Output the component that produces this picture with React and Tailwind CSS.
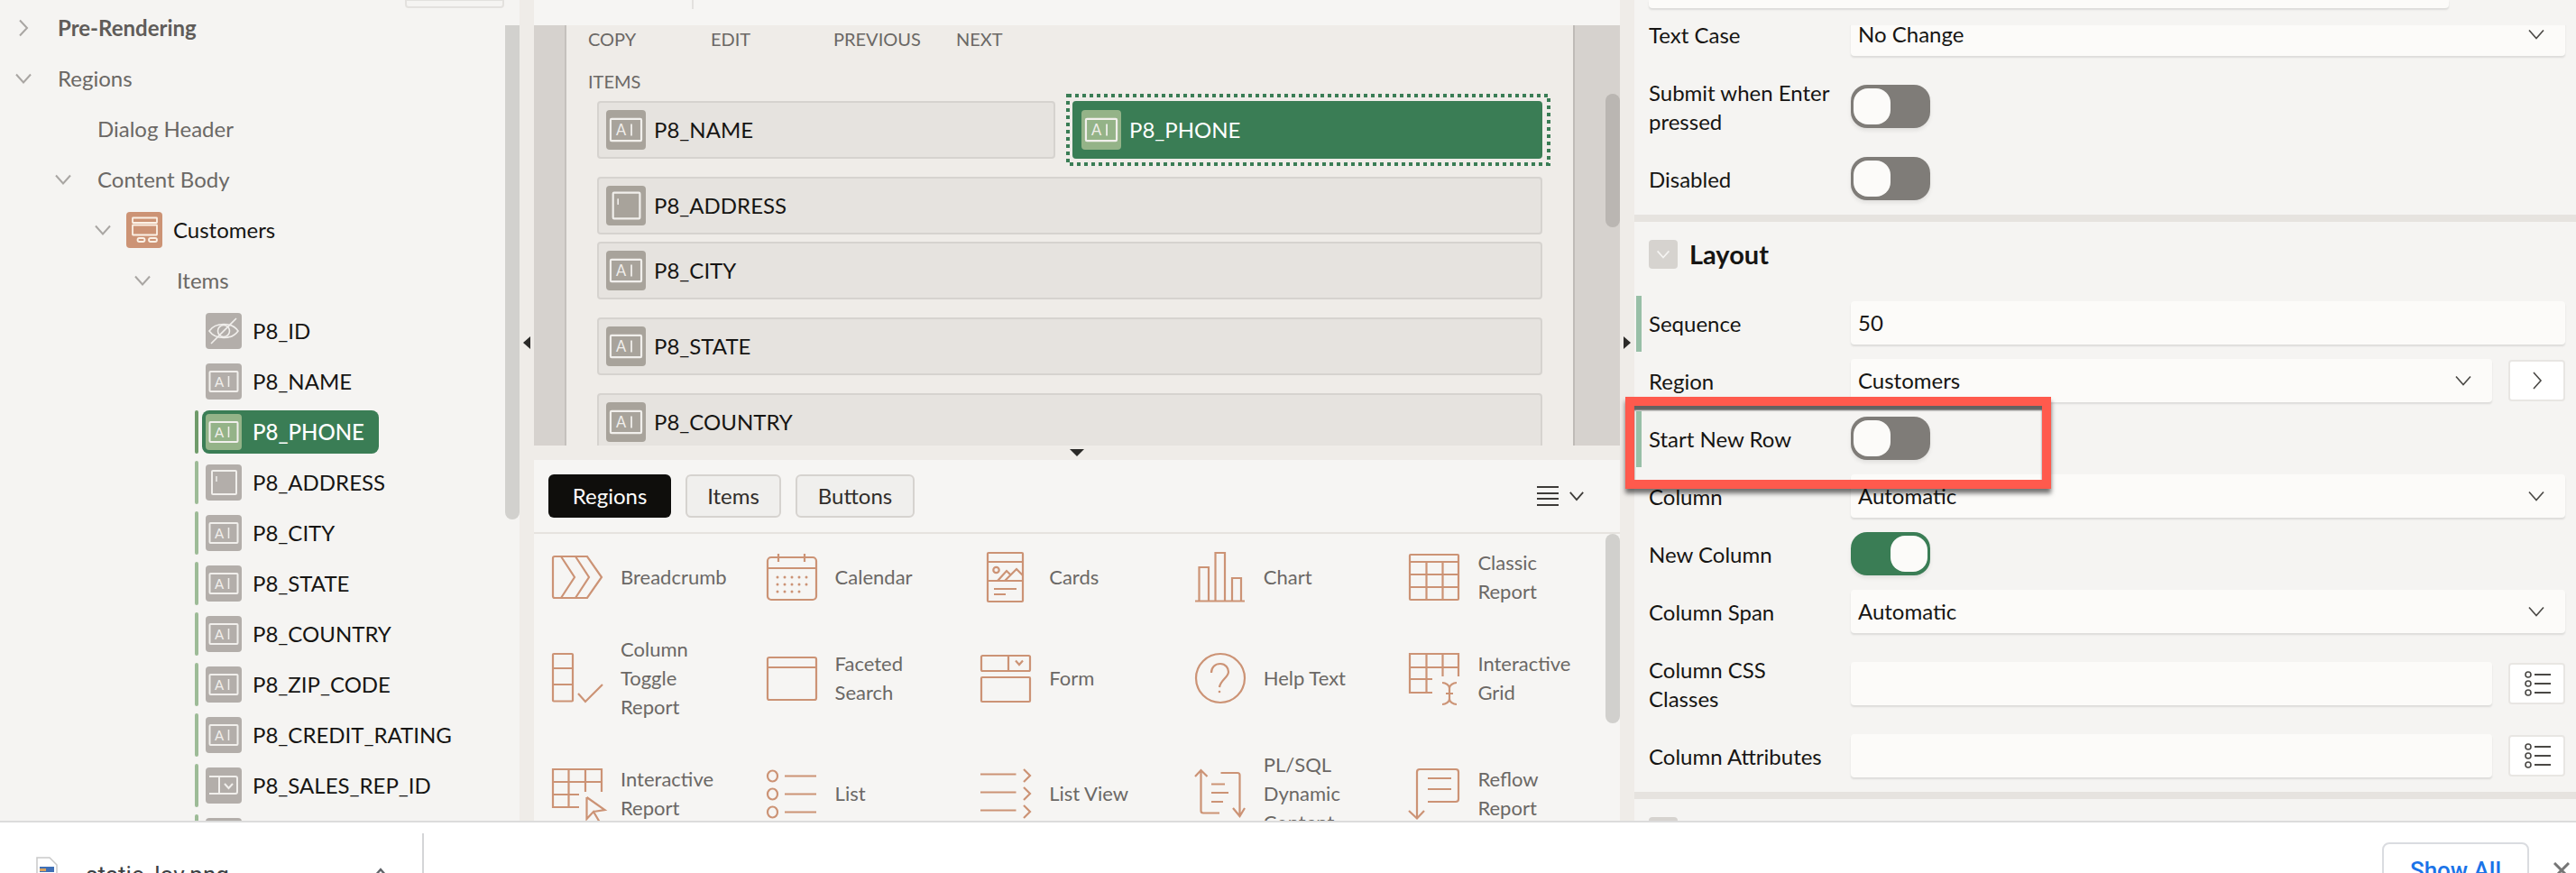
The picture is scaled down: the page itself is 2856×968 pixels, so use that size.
import { Fragment } from "react"

const ORANGE = "#cc9375"

function Down({ className = "w-5 h-3", color = "#a9a6a3", width = 2 }) {
  return (
    <svg viewBox="0 0 20 12" className={className} fill="none" stroke={color} strokeWidth={width}>
      <path d="M2 1.5 L10 10.5 L18 1.5" />
    </svg>
  )
}

function Right({ className = "w-5 h-5" }) {
  return (
    <svg viewBox="0 0 20 20" className={className} fill="none" stroke="#a9a6a3" strokeWidth="2">
      <path d="M6 1.5 L14 10 L6 18.5" />
    </svg>
  )
}

/* item type glyphs */
function ItemGlyph({ type, stroke = "#f1efec" }) {
  if (type === "hidden") {
    return (
      <svg viewBox="0 0 40 40" className="w-full h-full" fill="none" stroke={stroke} strokeWidth="1.6">
        <path d="M4 20 C11 10 29 10 36 20 C29 30 11 30 4 20 Z" />
        <circle cx="20" cy="20" r="6.5" />
        <path d="M6 34 L34 6" />
      </svg>
    )
  }
  if (type === "area") {
    return (
      <svg viewBox="0 0 40 40" className="w-full h-full" fill="none" stroke={stroke} strokeWidth="2">
        <rect x="7" y="7" width="27" height="26" rx="1" />
        <path d="M12 13 V19" strokeWidth="1.5" />
      </svg>
    )
  }
  if (type === "lov") {
    return (
      <svg viewBox="0 0 40 40" className="w-full h-full" fill="none" stroke={stroke} strokeWidth="2">
        <path d="M4 10 H33 Q35 10 35 12 V27 Q35 29 33 29 H4" />
        <path d="M15 10 V29" />
        <path d="M21 18 L25.5 23 L30 18" />
      </svg>
    )
  }
  return (
    <svg viewBox="0 0 40 40" className="w-full h-full" fill="none" stroke={stroke} strokeWidth="2">
      <rect x="4.5" y="9" width="31" height="22" rx="1" />
      <text x="15" y="25.5" fontSize="15" fill={stroke} stroke="none" textAnchor="middle" fontFamily="Lato, sans-serif">A</text>
      <path d="M25.5 14 V26" strokeWidth="1.6" />
    </svg>
  )
}

function TreeLabel({ children, className = "" }) {
  return <span className={`text-[24px] leading-8 ${className}`}>{children}</span>
}

function TreeItem({ name, type, selected, bar = true }) {
  return (
    <div className="h-14 flex items-center pl-[216px]">
      <div className={`w-1 h-12 rounded-sm ${bar ? (selected ? "bg-[#6f9b6a]" : "bg-[#9dbb97]") : ""}`} />
      <div className={`ml-1 h-12 flex items-center pl-1 pr-4 rounded-lg ${selected ? "bg-[#3a7d55] w-[196px]" : ""}`}>
        <div className={`w-10 h-10 rounded-[4px] shrink-0 ${selected ? "bg-[#94b388]" : "bg-[#b3aeaa]"}`}>
          <ItemGlyph type={type} />
        </div>
        <span className={`ml-3 text-[24px] leading-8 whitespace-nowrap ${selected ? "text-white font-medium" : "text-[#161513]"}`}>
          {name}
        </span>
      </div>
    </div>
  )
}

function TreePanel() {
  return (
    <div className="relative w-[576px] shrink-0 h-full bg-[#f5f4f2] overflow-hidden pt-[3px]">
      <div className="absolute left-[449px] -top-px w-[110px] h-[10px] rounded-b-[4px] border-2 border-[#e3e1de]" />
      <div className="absolute right-0 top-[28px] w-4 h-[548px] rounded-b-full bg-[#d2d1ce]" />

      <div className="h-14 flex items-center pl-4">
        <Right className="w-5 h-5" />
        <TreeLabel className="ml-7 font-bold text-[#5f5c59]">Pre-Rendering</TreeLabel>
      </div>
      <div className="h-14 flex items-center pl-4">
        <Down />
        <TreeLabel className="ml-7 text-[#6b6865]">Regions</TreeLabel>
      </div>
      <div className="h-14 flex items-center pl-[108px]">
        <TreeLabel className="text-[#6b6865]">Dialog Header</TreeLabel>
      </div>
      <div className="h-14 flex items-center pl-[60px]">
        <Down />
        <TreeLabel className="ml-7 text-[#6b6865]">Content Body</TreeLabel>
      </div>
      <div className="h-14 flex items-center pl-[104px]">
        <Down />
        <div className="ml-4 w-10 h-10 rounded-[4px] bg-[#cc9375]">
          <svg viewBox="0 0 40 40" className="w-full h-full" fill="none" stroke="#fbf1e6" strokeWidth="1.8">
            <rect x="7" y="6.5" width="27" height="5.5" rx="0.5" />
            <rect x="7" y="14.5" width="27" height="11" rx="0.5" />
            <rect x="12.5" y="29" width="8" height="4" rx="2" />
            <rect x="25" y="29" width="9" height="4" rx="2" />
          </svg>
        </div>
        <TreeLabel className="ml-3 text-[#161513]">Customers</TreeLabel>
      </div>
      <div className="h-14 flex items-center pl-[148px]">
        <Down />
        <TreeLabel className="ml-7 text-[#6b6865]">Items</TreeLabel>
      </div>
      <TreeItem name="P8_ID" type="hidden" bar={false} />
      <TreeItem name="P8_NAME" type="text" bar={false} />
      <TreeItem name="P8_PHONE" type="text" selected />
      <TreeItem name="P8_ADDRESS" type="area" />
      <TreeItem name="P8_CITY" type="text" />
      <TreeItem name="P8_STATE" type="text" />
      <TreeItem name="P8_COUNTRY" type="text" />
      <TreeItem name="P8_ZIP_CODE" type="text" />
      <TreeItem name="P8_CREDIT_RATING" type="text" />
      <TreeItem name="P8_SALES_REP_ID" type="lov" />
      <TreeItem name="" type="text" />
    </div>
  )
}

function Gutter({ children }) {
  return (
    <div className="w-4 shrink-0 h-full bg-[#efece8] pt-[373px] flex justify-center items-start">
      {children}
    </div>
  )
}

function CanvasItem({ name, type, selected, className = "" }) {
  return (
    <div
      className={`relative h-16 flex items-center pl-2 rounded-[4px] border-2 ${
        selected ? "bg-[#3a7d55] border-[#3a7d55]" : "bg-[#e6e3df] border-[#d6d3cf]"
      } ${className}`}
    >
      <div className={`w-11 h-11 rounded-[4px] shrink-0 ${selected ? "bg-[#94b388]" : "bg-[#a8a39b]"}`}>
        <ItemGlyph type={type} />
      </div>
      <span className={`ml-[9px] text-[24px] leading-8 ${selected ? "text-white" : "text-[#161513]"}`}>{name}</span>
      {selected && (
        <svg className="absolute left-[-9px] top-[-10px] overflow-visible" width="537" height="80" fill="none">
          <rect x="2" y="2" width="533" height="76" stroke="#3a7d55" strokeWidth="4" strokeDasharray="4 4" />
        </svg>
      )}
    </div>
  )
}

function Canvas() {
  return (
    <div className="relative h-[466px] flex overflow-hidden bg-[#efece8]">
      <div className="w-9 shrink-0 bg-[#d6d2ce] border-r-2 border-[#c5c1bd]" />
      <div className="flex-1 min-w-0">
        <div className="pl-6 flex h-[30px] items-center text-[20px] text-[#6b6865]">
          <span className="w-[136px]">COPY</span>
          <span className="w-[136px]">EDIT</span>
          <span className="w-[136px]">PREVIOUS</span>
          <span>NEXT</span>
        </div>
        <div className="pl-6 mt-[17px] h-[30px] flex items-center text-[20px] text-[#6b6865]">ITEMS</div>
        <div className="ml-[34px] w-[1048px] mt-[7px]">
          <div className="flex gap-[19px]">
            <CanvasItem name="P8_NAME" type="text" className="w-[508px]" />
            <CanvasItem name="P8_PHONE" type="text" selected className="w-[521px]" />
          </div>
          <CanvasItem name="P8_ADDRESS" type="area" className="mt-5" />
          <CanvasItem name="P8_CITY" type="text" className="mt-2" />
          <CanvasItem name="P8_STATE" type="text" className="mt-5" />
          <CanvasItem name="P8_COUNTRY" type="text" className="mt-5" />
        </div>
      </div>
      <div className="relative w-[52px] shrink-0 bg-[#d6d2ce] border-l-2 border-[#bfbbb7]">
        <div className="absolute right-0 top-[76px] w-4 h-[148px] rounded-full bg-[#bab6b2]" />
      </div>
    </div>
  )
}

function GalleryIcon({ children }) {
  return (
    <svg viewBox="0 0 56 64" className="w-14 h-16 shrink-0 overflow-visible" fill="none" stroke={ORANGE} strokeWidth="2.2">
      {children}
    </svg>
  )
}

const calendarDots = [
  [12, 32], [20, 32], [28, 32], [36, 32], [44, 32],
  [12, 40], [20, 40], [28, 40], [36, 40], [44, 40],
  [12, 48], [20, 48], [28, 48], [36, 48],
]

const gallery = [
  {
    lines: "Breadcrumb",
    icon: (
      <>
        <path d="M3 9 H39 L55 32 L39 55 H3 Q1 55 1 53 V11 Q1 9 3 9 Z" />
        <path d="M10 9 L25 32 L10 55" />
        <path d="M26 9 L41 32 L26 55" />
      </>
    ),
  },
  {
    lines: "Calendar",
    icon: (
      <>
        <rect x="1" y="10" width="54" height="47" rx="4" />
        <path d="M1 22 H55 M13 6 V15 M42 6 V15" />
        {calendarDots.map(([x, y]) => (
          <circle key={`${x}-${y}`} cx={x} cy={y} r="1.5" fill={ORANGE} stroke="none" />
        ))}
      </>
    ),
  },
  {
    lines: "Cards",
    icon: (
      <>
        <rect x="8" y="5" width="39" height="54" rx="1" />
        <path d="M8 15 H47 M8 36 H47" />
        <circle cx="17.5" cy="24" r="3.2" />
        <path d="M19 36 L29 25 L33 29 M27 36 L40 23 L47 30" />
        <path d="M15 45 H40 M15 51 H28" />
      </>
    ),
  },
  {
    lines: "Chart",
    icon: (
      <>
        <path d="M0 58.5 H55" />
        <path d="M4.5 58 V21 H15 V58 M22.5 58 V5 H33 V58 M41 58 V33 H51 V58" />
      </>
    ),
  },
  {
    lines: "Classic Report",
    icon: (
      <>
        <rect x="1" y="7" width="54" height="50" rx="1" />
        <path d="M1 15 H55 M1 29 H55 M1 43 H55 M19.5 15 V57 M37.5 15 V57" />
      </>
    ),
  },
  {
    lines: "Column Toggle Report",
    icon: (
      <>
        <rect x="1" y="5" width="22" height="52.5" rx="1" />
        <path d="M1 21 H23 M1 39 H23" />
        <path d="M29 49 L37 58 L56 39" />
      </>
    ),
  },
  {
    lines: "Faceted Search",
    icon: (
      <>
        <rect x="1" y="9" width="54" height="47" rx="2" />
        <path d="M1 20 H55" />
      </>
    ),
  },
  {
    lines: "Form",
    icon: (
      <>
        <rect x="1" y="7" width="54" height="17" rx="1.5" />
        <path d="M31 7 V24 M39 12.5 L43 17 L47 12.5" />
        <rect x="1" y="31" width="54" height="27" rx="1" />
      </>
    ),
  },
  {
    lines: "Help Text",
    icon: (
      <>
        <ellipse cx="28" cy="32" rx="27" ry="27" />
        <path d="M18 26 C18 20 22 16 28 16 C34 16 37 21 37 25 C37 31 28 34 27 42" />
        <circle cx="27" cy="47" r="1.3" fill={ORANGE} stroke="none" />
      </>
    ),
  },
  {
    lines: "Interactive Grid",
    icon: (
      <>
        <path d="M55 30 V5 H1 V48 H26 M1 20 H55 M1 33 H26 M19.5 5 V48 M37.5 5 V30" />
        <path d="M37 37 C41 37 45 40 45 43 C45 40 49 37 53 37 M45 43 V55 M37 61 C41 61 45 58 45 55 C45 58 49 61 53 61 M41 49 H49" />
      </>
    ),
  },
  {
    lines: "Interactive Report",
    icon: (
      <>
        <path d="M55 30 V5 H1 V47 H30 M1 19 H55 M1 33 H30 M18.5 5 V47 M37 5 V30" />
        <path d="M38.5 36 V60 L46 52 L52.5 63 M46 52 L58.5 50 L38.5 36" />
      </>
    ),
  },
  {
    lines: "List",
    icon: (
      <>
        <ellipse cx="6.5" cy="12.5" rx="5.5" ry="6" />
        <ellipse cx="6.5" cy="32.5" rx="5.5" ry="6" />
        <ellipse cx="6.5" cy="52.5" rx="5.5" ry="6" />
        <path d="M20 12.5 H55 M20 32.5 H55 M20 52.5 H55" />
      </>
    ),
  },
  {
    lines: "List View",
    icon: (
      <path d="M0 10.5 H39.5 M0 30.5 H39.5 M0 50.5 H39.5 M48 5 L55 12 L48 19 M48 25 L55 32 L48 39 M48 45 L55 52 L48 59" />
    ),
  },
  {
    lines: "PL/SQL Dynamic Content",
    icon: (
      <>
        <path d="M0 13 L6.5 6 L13.5 13 M6.5 6 V51 Q6.5 53.5 9 53.5 H27" />
        <path d="M28.5 9 H47 Q49.5 9 49.5 11.5 V56 M42 48 L49.5 57 L55 48" />
        <path d="M18 21.5 H33 M18 31 H37 M18 41 H31" />
      </>
    ),
  },
  {
    lines: "Reflow Report",
    icon: (
      <>
        <path d="M21 41 H52 Q55 41 55 38 V8 Q55 5 52 5 H12 Q9 5 9 8 V59" />
        <path d="M0 51 L9 59.5 L17 51" />
        <path d="M21 15 H47 M21 27 H47" />
      </>
    ),
  },
]

function GalleryCell({ item }) {
  return (
    <div className="flex items-center gap-5 py-4">
      <GalleryIcon>{item.icon}</GalleryIcon>
      <span className="max-w-[126px] text-[22px] leading-8 text-[#6b6865]">{item.lines}</span>
    </div>
  )
}

function Gallery() {
  return (
    <div className="relative h-[400px] bg-[#f6f5f3] overflow-hidden">
      <div className="h-20 flex items-center justify-between pl-4 pr-[39px] border-b-2 border-[#e6e3df] box-content">
        <div className="flex gap-4 text-[24px]">
          <button className="h-12 w-[136px] rounded-[6px] bg-[#0f0e0c] text-white">Regions</button>
          <button className="h-12 w-[106px] rounded-[6px] bg-[#f0efed] border-2 border-[#d6d3cf] text-[#312d2a]">Items</button>
          <button className="h-12 w-[132px] rounded-[6px] bg-[#f0efed] border-2 border-[#d6d3cf] text-[#312d2a]">Buttons</button>
        </div>
        <div className="flex items-center gap-[11px]">
          <svg viewBox="0 0 24 22" className="w-6 h-[22px]" fill="none" stroke="#3d3b38" strokeWidth="2">
            <path d="M0 1 H24 M0 8 H24 M0 14 H24 M0 21 H24" />
          </svg>
          <Down className="w-[18px] h-3" color="#3d3b38" />
        </div>
      </div>
      <div className="absolute right-0 top-[82px] w-4 h-[210px] rounded-full bg-[#d1d0cd]" />
      <div className="ml-5 grid grid-cols-5 w-[1188px] items-center">
        {gallery.map((item) => (
          <Fragment key={item.lines}>
            <GalleryCell item={item} />
          </Fragment>
        ))}
      </div>
    </div>
  )
}

function Field({ value, chevron, className = "w-[792px]" }) {
  return (
    <div className={`h-12 flex items-center justify-between pl-2 pr-[22px] rounded-[4px] bg-[#fcfbf9] shadow-[0_2px_2px_rgba(0,0,0,0.1)] text-[24px] text-[#161513] ${className}`}>
      <span>{value}</span>
      {chevron && <Down className="w-5 h-3" color="#4a4845" width={1.6} />}
    </div>
  )
}

function Toggle({ on }) {
  return (
    <div className={`w-[88px] h-12 flex items-center px-[3px] rounded-[18px] shadow-[0_3px_4px_rgba(0,0,0,0.08)] ${on ? "bg-[#3a7d55] justify-end" : "bg-[#7f7c78]"}`}>
      <div className="w-[41px] h-10 rounded-[16px] bg-[#fcfbf9]" />
    </div>
  )
}

function SideButton({ children }) {
  return (
    <div className="ml-[18px] w-[63px] h-[46px] flex items-center justify-center rounded-[4px] bg-white border-2 border-[#e8e6e3]">
      {children}
    </div>
  )
}

function ListGlyph() {
  return (
    <svg viewBox="0 0 32 32" className="w-8 h-8" fill="none" stroke="#4a4845" strokeWidth="1.6">
      <circle cx="6" cy="6" r="3" />
      <circle cx="6" cy="16" r="3" />
      <circle cx="6" cy="26" r="3" />
      <path d="M13 6 H31 M13 16 H31 M13 26 H31" strokeWidth="2" />
    </svg>
  )
}

function PropRow({ label, bar, className = "", children }) {
  return (
    <div className={`relative h-16 flex items-center pl-4 ${className}`}>
      {bar && <div className="absolute left-[2px] bottom-0 w-[6px] h-[62px] bg-[#98bfa7]" />}
      <div className="w-[224px] shrink-0 pr-4 text-[24px] leading-8 text-[#161513] translate-y-[1px]">{label}</div>
      {children}
    </div>
  )
}

function Properties() {
  return (
    <div className="relative flex-1 min-w-0 h-full bg-[#f5f4f2] overflow-hidden">
      <div className="h-[28px] pl-4">
        <div className="w-[887px] h-[9px] rounded-b-[4px] bg-[#fcfbf9] shadow-[0_2px_2px_rgba(0,0,0,0.1)]" />
      </div>
      <div className="h-[882px] overflow-hidden">
        <div className="-mt-[22px]">
          <PropRow label="Text Case">
            <Field value="No Change" chevron />
          </PropRow>
          <PropRow label="Submit when Enter pressed" className="mt-4">
            <Toggle />
          </PropRow>
          <PropRow label="Disabled" className="mt-4">
            <Toggle />
          </PropRow>
          <div className="mt-2 h-2 bg-[#e6e3df]" />
          <div className="h-20 pl-4 pt-5">
            <div className="flex items-center h-8">
              <div className="w-8 h-8 flex items-center justify-center rounded-[4px] bg-[#d6d3cf]">
                <Down className="w-4 h-[10px]" color="#f5f4f2" />
              </div>
              <span className="ml-[13px] text-[29px] font-bold text-[#161513]">Layout</span>
            </div>
          </div>
          <PropRow label="Sequence" bar>
            <Field value="50" />
          </PropRow>
          <PropRow label="Region">
            <Field value="Customers" chevron className="w-[711px]" />
            <SideButton>
              <svg viewBox="0 0 12 20" className="w-3 h-5" fill="none" stroke="#4a4845" strokeWidth="1.6">
                <path d="M2 1 L10 10 L2 19" />
              </svg>
            </SideButton>
          </PropRow>
          <PropRow label="Start New Row" bar>
            <Toggle />
          </PropRow>
          <PropRow label="Column">
            <Field value="Automatic" chevron />
          </PropRow>
          <PropRow label="New Column">
            <Toggle on />
          </PropRow>
          <PropRow label="Column Span">
            <Field value="Automatic" chevron />
          </PropRow>
          <PropRow label="Column CSS Classes" className="mt-4">
            <Field value="" className="w-[711px]" />
            <SideButton>
              <ListGlyph />
            </SideButton>
          </PropRow>
          <PropRow label="Column Attributes" className="mt-4">
            <Field value="" className="w-[711px]" />
            <SideButton>
              <ListGlyph />
            </SideButton>
          </PropRow>
          <div className="mt-2 h-2 bg-[#e6e3df]" />
          <div className="pl-4 pt-5">
            <div className="w-8 h-8 rounded-[4px] bg-[#d6d3cf]" />
          </div>
        </div>
      </div>
    </div>
  )
}

function DownloadBar() {
  return (
    <div className="h-[58px] bg-white border-t-2 border-[#dcdcdc] overflow-hidden">
      <div className="h-[116px] flex items-center pl-10 pr-[7px] font-['Roboto',sans-serif]">
        <svg viewBox="0 0 24 40" className="w-6 h-10 shrink-0" fill="none">
          <path d="M1 1 H15 L23 9 V39 H1 Z" fill="#fff" stroke="#c9c9c9" strokeWidth="1.5" />
          <rect x="4" y="11" width="16" height="6" fill="#3f6fb5" />
          <rect x="4" y="13" width="7" height="3" fill="#d9a25f" />
          <rect x="5" y="18" width="14" height="6" fill="#5b7fa8" />
        </svg>
        <span className="ml-[31px] w-[320px] text-[26px] text-[#3c4043]">static_lov.png</span>
        <svg viewBox="0 0 14 10" className="w-[14px] h-[10px] -translate-y-[3px]" fill="none" stroke="#5f6368" strokeWidth="2.4">
          <path d="M1 9 L7 2 L13 9" />
        </svg>
        <div className="ml-[39px] w-[2px] h-[92px] bg-[#d4d5d7]" />
        <div className="flex-1" />
        <div className="w-[163px] h-[72px] pb-[10px] flex items-center justify-center rounded-lg border-2 border-[#dadce0] text-[26px] font-medium text-[#1a73e8]">
          Show All
        </div>
        <svg viewBox="0 0 18 18" className="ml-[27px] w-[18px] h-[18px] -translate-y-[5px]" fill="none" stroke="#757575" strokeWidth="3">
          <path d="M1 1 L17 17 M17 1 L1 17" />
        </svg>
      </div>
    </div>
  )
}

export default function App() {
  return (
    <div className="relative w-[2856px] h-[968px] flex flex-col overflow-hidden bg-white font-['Lato',sans-serif]">
      <div className="h-[910px] flex">
        <TreePanel />
        <Gutter>
          <svg viewBox="0 0 8 14" className="w-2 h-[14px]" fill="#2b2a28">
            <path d="M8 0 V14 L0 7 Z" />
          </svg>
        </Gutter>
        <div className="w-[1204px] shrink-0 h-full flex flex-col">
          <div className="h-[28px] bg-[#f6f5f3] pl-[175px]">
            <div className="w-[2px] h-[10px] bg-[#e3e1de]" />
          </div>
          <Canvas />
          <div className="h-4 bg-[#efece8] flex justify-center pt-1">
            <svg viewBox="0 0 16 8" className="w-4 h-2" fill="#2b2a28">
              <path d="M0 0 H16 L8 8 Z" />
            </svg>
          </div>
          <Gallery />
        </div>
        <Gutter>
          <svg viewBox="0 0 8 14" className="w-2 h-[14px]" fill="#2b2a28">
            <path d="M0 0 V14 L8 7 Z" />
          </svg>
        </Gutter>
        <Properties />
      </div>
      <DownloadBar />
      <div className="absolute left-[1802px] top-[440px] w-[472px] h-[102px] border-[10px] border-[#ff5a4d] shadow-[0_5px_5px_rgba(0,0,0,0.55),inset_0_5px_2px_rgba(0,0,0,0.6)]" />
    </div>
  )
}
